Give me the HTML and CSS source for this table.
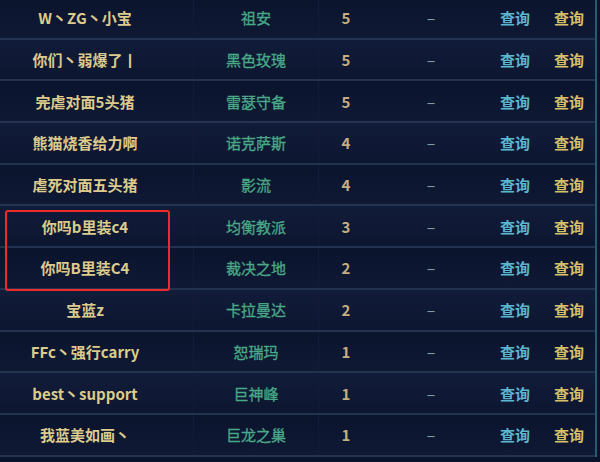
FILE: index.html
```html
<!DOCTYPE html>
<html lang="zh-CN">
<head>
  <meta charset="UTF-8">
  <meta name="viewport" content="width=device-width, initial-scale=1.0">
  <title>战绩查询</title>
  <link rel="stylesheet" href="styles.css">
</head>
<body>
  <div class="board">
    <div class="list">
      <div class="row"><span class="name">W丶ZG丶小宝</span><span class="server">祖安</span><span class="num">5</span><span class="dash">--</span><span class="q1">查询</span><span class="q2">查询</span></div>
      <div class="row"><span class="name">你们丶弱爆了丨</span><span class="server">黑色玫瑰</span><span class="num">5</span><span class="dash">--</span><span class="q1">查询</span><span class="q2">查询</span></div>
      <div class="row"><span class="name">完虐对面5头猪</span><span class="server">雷瑟守备</span><span class="num">5</span><span class="dash">--</span><span class="q1">查询</span><span class="q2">查询</span></div>
      <div class="row"><span class="name">熊猫烧香给力啊</span><span class="server">诺克萨斯</span><span class="num">4</span><span class="dash">--</span><span class="q1">查询</span><span class="q2">查询</span></div>
      <div class="row"><span class="name">虐死对面五头猪</span><span class="server">影流</span><span class="num">4</span><span class="dash">--</span><span class="q1">查询</span><span class="q2">查询</span></div>
      <div class="row"><span class="name">你吗b里装c4</span><span class="server">均衡教派</span><span class="num">3</span><span class="dash">--</span><span class="q1">查询</span><span class="q2">查询</span></div>
      <div class="row"><span class="name">你吗B里装C4</span><span class="server">裁决之地</span><span class="num">2</span><span class="dash">--</span><span class="q1">查询</span><span class="q2">查询</span></div>
      <div class="row"><span class="name">宝蓝z</span><span class="server">卡拉曼达</span><span class="num">2</span><span class="dash">--</span><span class="q1">查询</span><span class="q2">查询</span></div>
      <div class="row"><span class="name">FFc丶强行carry</span><span class="server">恕瑞玛</span><span class="num">1</span><span class="dash">--</span><span class="q1">查询</span><span class="q2">查询</span></div>
      <div class="row"><span class="name">best丶support</span><span class="server">巨神峰</span><span class="num">1</span><span class="dash">--</span><span class="q1">查询</span><span class="q2">查询</span></div>
      <div class="row"><span class="name">我蓝美如画丶</span><span class="server">巨龙之巢</span><span class="num">1</span><span class="dash">--</span><span class="q1">查询</span><span class="q2">查询</span></div>
    </div>
    <div class="mark"></div>
  </div>
</body>
</html>
```

FILE: styles.css
```css
body {
  margin: 0;
  background-color: #0b132b;
  font-family: "Noto Sans CJK SC", "Noto Sans", sans-serif;
  overflow: hidden;
}
.board {
  position: relative;
  width: 600px;
  height: 462px;
  overflow: hidden;
}
.list {
  margin-top: -2px;
  width: 595px;
  border-right: 2px solid #2a5a72;
}
.row {
  display: grid;
  grid-template-columns: 193px 126px 54px 114px 56px 52px;
  align-items: center;
  height: 41.7px;
  box-sizing: border-box;
  border-bottom: 2px solid #23324f;
  background: linear-gradient(#0b142d, #0f1934);
  font-size: 15px;
  font-weight: bold;
  text-align: center;
  white-space: nowrap;
}
.row:nth-child(even) {
  background: linear-gradient(#111c3a, #0d1630);
}
.row span {
  display: flex;
  align-items: center;
  justify-content: center;
  height: 100%;
}
.name {
  padding-right: 23px;
  color: #dccb8c;
}
.server {
  color: #4aa987;
  border-left: 1px solid #121c38;
  border-right: 1px solid #121c38;
  font-weight: normal;
  -webkit-text-stroke: 0.3px #4aa987;
}
.num {
  color: #c4ae82;
}
.dash {
  color: #8797a8;
  letter-spacing: -2px;
  font-weight: normal;
}
.q1 {
  color: #5cb6cf;
}
.q2 {
  color: #d6bf6a;
}
.mark {
  position: absolute;
  left: 5px;
  top: 210px;
  width: 161px;
  height: 77px;
  border: 2px solid #ee2a2a;
  border-radius: 3px;
}
```
